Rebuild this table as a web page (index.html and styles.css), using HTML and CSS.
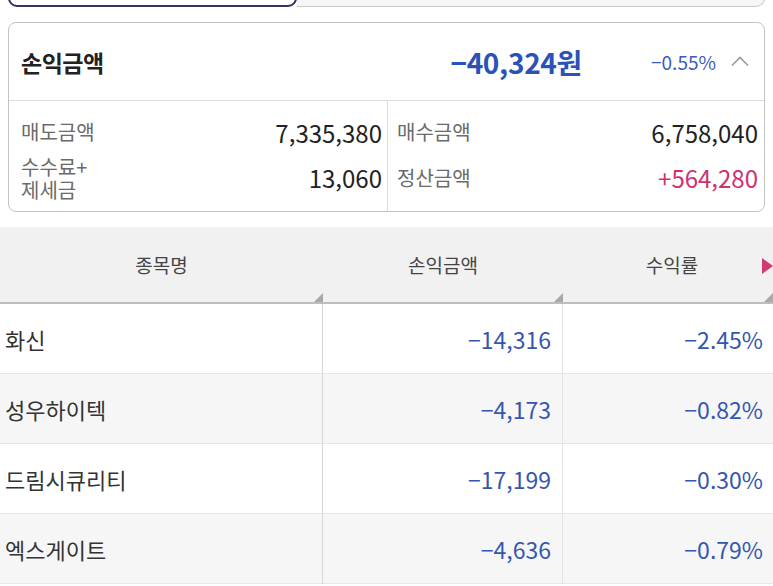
FILE: index.html
```html
<!DOCTYPE html>
<html lang="ko">
<head>
<meta charset="utf-8">
<link rel="stylesheet" href="styles.css">
</head>
<body>
<div class="tabs">
  <div class="tab tab-active"></div>
  <div class="tab tab-idle"></div>
</div>

<section class="card">
  <div class="card-head">
    <span class="head-label">손익금액</span>
    <span class="head-amount">−40,324원</span>
    <span class="head-rate">−0.55%</span>
    <svg class="chev" width="20" height="12" viewBox="0 0 20 12"><path d="M2 10.5 L10 2.5 L18 10.5" fill="none" stroke="#9a9a9a" stroke-width="1.6"/></svg>
  </div>
  <div class="card-body">
    <div class="col">
      <div class="row r1"><span class="lbl">매도금액</span><span class="val">7,335,380</span></div>
      <div class="row r2"><span class="lbl"><span class="ln">수수료+</span><span class="ln">제세금</span></span><span class="val">13,060</span></div>
    </div>
    <div class="col col-right">
      <div class="row r1"><span class="lbl">매수금액</span><span class="val">6,758,040</span></div>
      <div class="row r2"><span class="lbl">정산금액</span><span class="val plus">+564,280</span></div>
    </div>
  </div>
</section>

<div class="grid">
  <div class="th c1">종목명</div>
  <div class="th c2">손익금액</div>
  <div class="th c3">수익률<span class="more"></span></div>

  <div class="td name">화신</div>
  <div class="td num">−14,316</div>
  <div class="td num">−2.45%</div>

  <div class="td name alt">성우하이텍</div>
  <div class="td num alt">−4,173</div>
  <div class="td num alt">−0.82%</div>

  <div class="td name">드림시큐리티</div>
  <div class="td num">−17,199</div>
  <div class="td num">−0.30%</div>

  <div class="td name alt">엑스게이트</div>
  <div class="td num alt">−4,636</div>
  <div class="td num alt">−0.79%</div>
</div>
</body>
</html>
```

FILE: styles.css
```css
* { box-sizing: border-box; }
html, body { margin: 0; padding: 0; background: #fff; }
body {
  width: 773px;
  height: 586px;
  overflow: hidden;
  font-family: "Noto Sans CJK KR", "Noto Sans", sans-serif;
  color: #222;
}

.tabs {
  display: flex;
  margin: -34px 8px 0 8px;
  height: 41px;
}
.tab { height: 100%; }
.tab-active {
  width: 289px;
  border: 2px solid #33345f;
  border-radius: 9px;
  background: #fff;
}
.tab-idle {
  flex: 1;
  border: 1px solid #c9c9c9;
  border-left: none;
  border-radius: 0 9px 9px 0;
  background: #f6f6f6;
}

.card {
  margin: 15px 8px 0 8px;
  border: 1.5px solid #c2c2c2;
  border-radius: 8px;
  background: #fff;
}
.card-head {
  height: 78px;
  display: flex;
  align-items: center;
  padding: 0 14px 0 12px;
  border-bottom: 1px solid #dcdcdc;
}
.head-label {
  font-size: 23px;
  font-weight: 700;
  color: #222;
  flex: 1;
  letter-spacing: -0.5px;
}
.head-amount {
  font-size: 28px;
  font-weight: 700;
  color: #2b52b8;
  letter-spacing: -0.3px;
  margin-right: 5px;
}
.head-rate {
  margin-left: 64px;
  font-size: 19px;
  color: #3a5cbf;
}
.chev { margin-left: 14px; margin-top: -2px; }

.card-body {
  display: grid;
  grid-template-columns: 378px 1fr;
  height: 110px;
}
.col { padding-top: 12px; }
.col-right { border-left: 1px solid #dcdcdc; }
.row {
  display: flex;
  justify-content: space-between;
  align-items: center;
}
.r1 { height: 38px; }
.r2 { height: 52px; }
.col .row { padding: 0 5px 0 12px; }
.col-right .row { padding: 0 6px 0 9px; }
.lbl {
  font-size: 20px;
  color: #6a6a6a;
  line-height: 24px;
}
.r2 .lbl { padding-top: 2px; }
.ln { display: block; line-height: 23px; }
.val {
  font-size: 24px;
  color: #222;
}
.val.plus { color: #d0306e; }

.grid {
  margin-top: 15px;
  display: grid;
  grid-template-columns: 323px 240px 210px;
  grid-template-rows: 77px;
  grid-auto-rows: 70px;
}
.th {
  position: relative;
  background: #f1f1f1;
  border-bottom: 2px solid #bdbdbd;
  display: flex;
  align-items: center;
  justify-content: center;
  font-size: 19px;
  color: #444;
}
.th::after {
  content: "";
  position: absolute;
  right: 0;
  bottom: 0;
  border-style: solid;
  border-width: 0 0 9px 9px;
  border-color: transparent transparent #a9a9a9 transparent;
}
.c3 { padding-left: 8px; }
.more {
  position: absolute;
  right: 0;
  top: 31px;
  border-style: solid;
  border-width: 8px 0 8px 11px;
  border-color: transparent transparent transparent #d03a77;
}
.td {
  display: flex;
  align-items: center;
  font-size: 22px;
  border-bottom: 1px solid #e6e6e6;
  background: #fff;
}
.td.alt { background: #f6f6f6; }
.name { padding-left: 5px; color: #333; border-right: 1px solid #d6d6d6; }
.num {
  justify-content: flex-end;
  color: #3556b0;
  font-size: 23px;
}
.grid .td:nth-child(3n+2) { padding-right: 11px; border-right: 1px solid #e3e3e3; }
.grid .td:nth-child(3n) { padding-right: 10px; }
```
